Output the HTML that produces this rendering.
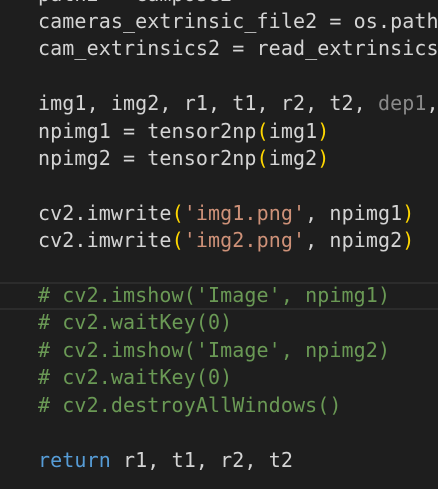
<!DOCTYPE html>
<html><head><style>
html,body{margin:0;padding:0;background:#1e1e1e;width:438px;height:489px;overflow:hidden}
.c{position:absolute;left:38px;top:-19.4px;font-family:"DejaVu Sans Mono","Liberation Mono",monospace;font-size:20px;letter-spacing:0.1px;line-height:27.4px;color:#d4d4d4;white-space:pre}
.hl{position:absolute;left:0;width:438px;top:282px;height:24px;border-top:2px solid #2c2c2c;border-bottom:2px solid #2c2c2c}
.s{color:#ce9178}.k{color:#6a9955}.y{color:#ffd700}.r{color:#569cd6}.g{color:#8a8a8a}
</style></head><body>
<div class="hl"></div>
<div class="c">path2 = campose2
cameras_extrinsic_file2 = os.path
cam_extrinsics2 = read_extrinsics

img1, img2, r1, t1, r2, t2, <span class="g">dep1</span>,
npimg1 = tensor2np<span class="y">(</span>img1<span class="y">)</span>
npimg2 = tensor2np<span class="y">(</span>img2<span class="y">)</span>

cv2.imwrite<span class="y">(</span><span class="s">'img1.png'</span>, npimg1<span class="y">)</span>
cv2.imwrite<span class="y">(</span><span class="s">'img2.png'</span>, npimg2<span class="y">)</span>

<span class="k"># cv2.imshow('Image', npimg1)</span>
<span class="k"># cv2.waitKey(0)</span>
<span class="k"># cv2.imshow('Image', npimg2)</span>
<span class="k"># cv2.waitKey(0)</span>
<span class="k"># cv2.destroyAllWindows()</span>

<span class="r">return</span> r1, t1, r2, t2</div>
</body></html>
